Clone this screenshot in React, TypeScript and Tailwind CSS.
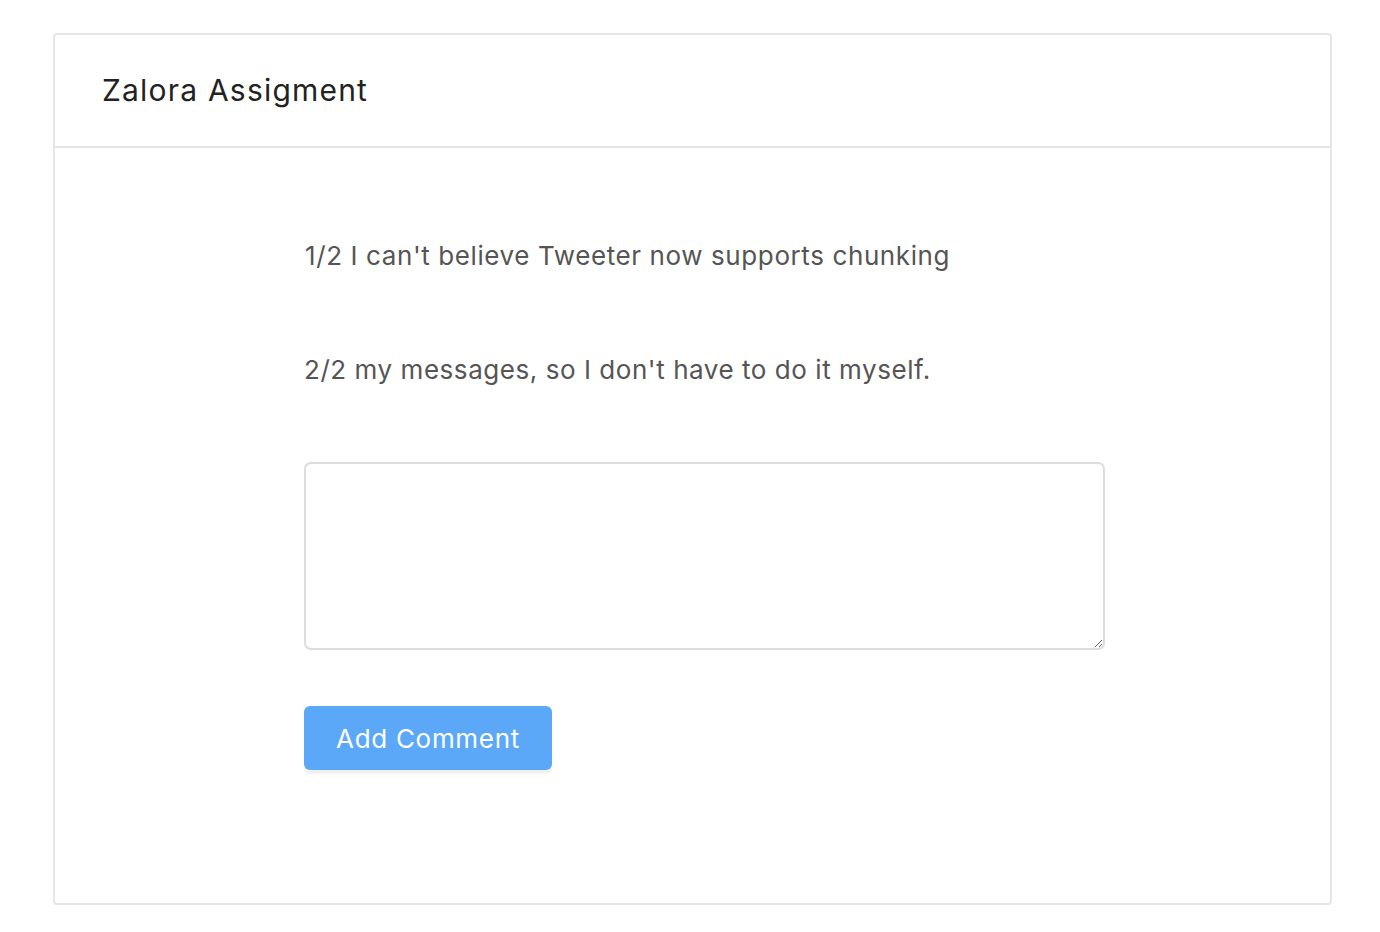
import React from "react";

export default function App() {
  return (
    <div className="min-h-[932px] w-full bg-white pt-[33px] px-[53px] pb-[26px]" style={{ fontFamily: "Inter, 'Noto Sans', sans-serif" }}>
      <div className="w-[1279px] border-2 border-[#e6e6e6] rounded-[4px] bg-white">
        <div className="h-[113px] border-b-2 border-[#e6e6e6] flex items-center pl-[47px]">
          <h1 className="text-[30px] text-[#222] tracking-[1.2px]">Zalora Assigment</h1>
        </div>
        <div className="pl-[249px] pt-[90px] pb-[133px]">
          <p className="text-[26px] leading-[36px] text-[#555] tracking-[0.6px] pl-px">1/2 I can't believe Tweeter now supports chunking</p>
          <p className="text-[26px] leading-[36px] text-[#555] tracking-[0.55px] mt-[78px]">2/2 my messages, so I don't have to do it myself.</p>
          <textarea className="block mt-[74px] w-[801px] h-[188px] border-2 border-[#dcdcdc] rounded-[7px] outline-none" />
          <button className="mt-[56px] w-[248px] h-[64px] rounded-[6px] bg-[#5aa8f7] text-white text-[26px] tracking-[0.7px] shadow-[0_4px_2px_rgba(0,0,0,0.06)]">Add Comment</button>
        </div>
      </div>
    </div>
  );
}
